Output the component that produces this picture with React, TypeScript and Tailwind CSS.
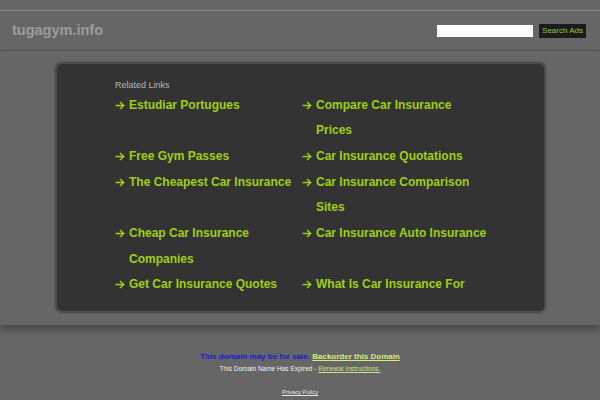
import React from "react";

const leftLinks = [
  "Estudiar Portugues",
  "Free Gym Passes",
  "The Cheapest Car Insurance",
  "Cheap Car Insurance Companies",
  "Get Car Insurance Quotes",
];

const rightLinks = [
  "Compare Car Insurance Prices",
  "Car Insurance Quotations",
  "Car Insurance Comparison Sites",
  "Car Insurance Auto Insurance",
  "What Is Car Insurance For",
];

const Arrow = () => (
  <svg width="10" height="9" viewBox="0 0 10 9" className="mt-[8px] shrink-0" fill="none">
    <path d="M0.5 4.5H8.5M5 1L8.7 4.5L5 8" stroke="#9fcf13" strokeWidth="1.5" />
  </svg>
);

const LinkItem = ({ label }: { label: string }) => (
  <a href="#" className="flex items-start text-[12px] font-bold leading-[25.7px] text-[#9fcf13] no-underline">
    <span className="flex w-[14px] shrink-0">
      <Arrow />
    </span>
    <span>{label}</span>
  </a>
);

export default function App() {
  return (
    <div
      className="min-h-[400px] w-full overflow-hidden bg-[#666666]"
      style={{ fontFamily: '"Liberation Sans", Arial, sans-serif' }}
    >
      <div className="h-[10px]" />
      {/* header */}
      <div className="flex h-[41px] items-center justify-between border-t border-b border-t-[#8c8c8c] border-b-[#585858] pl-[12px] pr-[14px]">
        <div className="text-[14.5px] font-bold text-[#9c9c9c]">tugagym.info</div>
        <div className="flex items-center gap-[6px]">
          <input className="h-[12px] w-[96px] border-0 bg-white outline-none" />
          <button className="h-[14px] bg-[#1c1c1c] px-[3px] text-[8px] leading-[14px] text-[#98c43a]">
            Search Ads
          </button>
        </div>
      </div>

      {/* main */}
      <div className="relative bg-[#666666] pb-[12px] pt-[11px] shadow-[0_4px_8px_rgba(0,0,0,0.35)]">
        <div className="ml-[55px] h-[251px] w-[491px] rounded-[7px] border-2 border-[#4d4d4d] bg-[#333333] pl-[58px] pt-[15px] shadow-[0_0_1px_1px_#5a5a5a]">
          <div className="text-[9px] text-[#b5b5b5]">Related Links</div>
          <div className="grid grid-cols-[187px_187px]">
            {leftLinks.map((l, i) => (
              <React.Fragment key={l}>
                <LinkItem label={l} />
                <LinkItem label={rightLinks[i]} />
              </React.Fragment>
            ))}
          </div>
        </div>
      </div>

      {/* footer */}
      <div className="pt-[26px] text-center">
        <div className="text-[8px] font-bold leading-[11px]">
          <span className="text-[#1a1ad4]">This domain may be for sale. </span>
          <a href="#" className="text-[#d6ef7a] underline">Backorder this Domain</a>
        </div>
        <div className="mt-[2px] text-[6.5px] leading-[10px] text-[#f0f0f0]">
          This Domain Name Has Expired -{" "}
          <a href="#" className="text-[#cde07e] underline">Renewal Instructions.</a>
        </div>
        <div className="mt-[14px] text-[5.8px] leading-[8px]">
          <a href="#" className="text-[#e6e6e6] underline">Privacy Policy</a>
        </div>
      </div>
    </div>
  );
}
